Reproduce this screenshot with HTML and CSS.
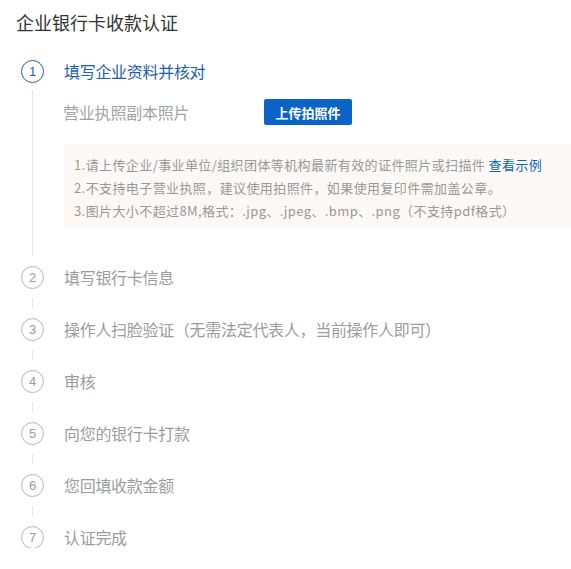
FILE: index.html
```html
<!DOCTYPE html>
<html lang="zh-CN">
<head>
<meta charset="utf-8">
<link rel="stylesheet" href="styles.css">
</head>
<body>
<div class="page">
  <h1 class="title">企业银行卡收款认证</h1>
  <div class="steps">
    <div class="step active">
      <span class="num">1</span>
      <span class="label">填写企业资料并核对</span>
    </div>
    <div class="body">
      <div class="upload-row">
        <span class="field">营业执照副本照片</span>
        <button class="btn">上传拍照件</button>
      </div>
      <div class="tips">
        <p>1.请上传企业/事业单位/组织团体等机构最新有效的证件照片或扫描件 <a class="link">查看示例</a></p>
        <p>2.不支持电子营业执照，建议使用拍照件，如果使用复印件需加盖公章。</p>
        <p>3.图片大小不超过8M,格式：.jpg、.jpeg、.bmp、.png（不支持pdf格式）</p>
      </div>
    </div>
    <div class="step"><span class="num">2</span><span class="label">填写银行卡信息</span></div>
    <div class="conn"></div>
    <div class="step"><span class="num">3</span><span class="label">操作人扫脸验证（无需法定代表人，当前操作人即可）</span></div>
    <div class="conn"></div>
    <div class="step"><span class="num">4</span><span class="label">审核</span></div>
    <div class="conn"></div>
    <div class="step"><span class="num">5</span><span class="label">向您的银行卡打款</span></div>
    <div class="conn"></div>
    <div class="step"><span class="num">6</span><span class="label">您回填收款金额</span></div>
    <div class="conn"></div>
    <div class="step"><span class="num">7</span><span class="label">认证完成</span></div>
  </div>
</div>
</body>
</html>
```

FILE: styles.css
```css
* { box-sizing: border-box; }
html, body { margin: 0; padding: 0; background: #fff; }
body {
  font-family: "Noto Sans CJK SC", "Noto Sans", sans-serif;
  color: #333;
}
.page { padding: 10px 0 0 16px; }
.title {
  margin: 0;
  font-size: 18px;
  font-weight: normal;
  line-height: 24px;
  color: #333;
}
.steps { margin-top: 26px; padding-left: 5px; }
.step {
  display: flex;
  align-items: center;
  height: 22px;
}
.num {
  width: 23px;
  height: 23px;
  flex: none;
  border: 1px solid #b4b4bc;
  border-radius: 50%;
  display: flex;
  align-items: center;
  justify-content: center;
  font-size: 13px;
  color: #9a9aa2;
  font-family: "Liberation Sans", "Noto Sans", sans-serif;
}
.label {
  margin-left: 20px;
  font-size: 16px;
  line-height: 22px;
  letter-spacing: -0.3px;
  color: #9c9c9c;
}
.step.active .num { border-color: #1b5fae; color: #1b5fae; }
.step.active .label { color: #1b5fae; }
.conn {
  margin: 10px 0 10px 11px;
  width: 1px;
  height: 10px;
  background: #e6e6e6;
}
.body {
  margin: 8px 0 10px 11px;
  border-left: 1px solid #e6e6e6;
  padding: 9px 0 27px 30px;
}
.upload-row { display: flex; align-items: center; height: 26px; }
.field {
  width: 201px;
  font-size: 16px;
  letter-spacing: -0.2px;
  color: #a3a3a3;
}
.btn {
  width: 88px;
  height: 26px;
  border: 0;
  border-radius: 2px;
  background: #0b63c5;
  color: #fff;
  font-family: inherit;
  font-size: 13px;
  font-weight: bold;
  padding: 0;
}
.tips {
  margin-top: 19px;
  margin-left: 1px;
  background: #fcf8f5;
  padding: 9px 0 7px 10px;
  font-size: 13px;
  line-height: 23px;
  letter-spacing: 0.4px;
  color: #999;
  white-space: nowrap;
}
.tips p { margin: 0; }
.link { color: #0b63c5; }
```
